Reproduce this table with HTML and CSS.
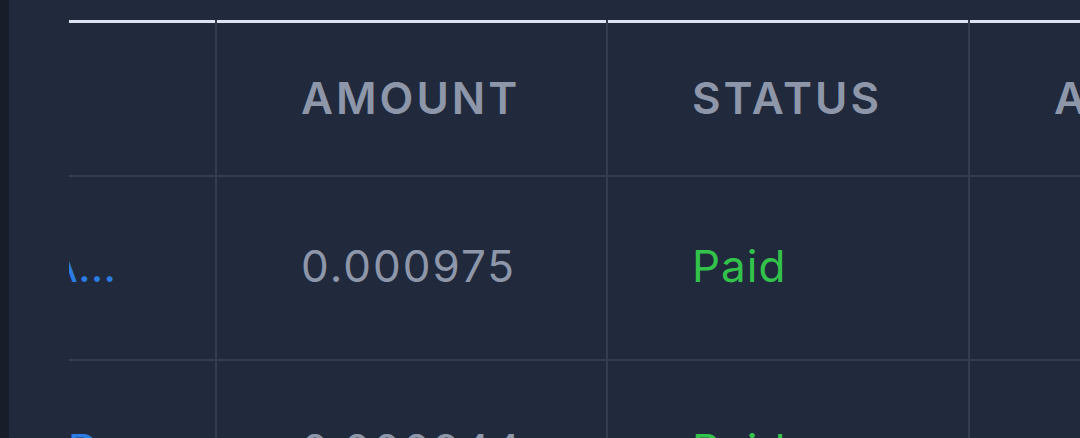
FILE: index.html
```html
<!DOCTYPE html>
<html lang="en">
<head>
    <meta charset="UTF-8">
    <meta name="viewport" content="width=device-width, initial-scale=1.0">
    <title>Payouts</title>
    <link rel="stylesheet" href="styles.css">
</head>
<body>

<div class="sidebar"></div>

<div class="main">
    <div class="scroller">
        <table class="payouts">
            <colgroup>
                <col class="col-tx">
                <col class="col-amount">
                <col class="col-status">
                <col class="col-address">
            </colgroup>
            <thead>
                <tr>
                    <th>TX</th>
                    <th>AMOUNT</th>
                    <th>STATUS</th>
                    <th>ADDRESS</th>
                </tr>
            </thead>
            <tbody>
                <tr>
                    <td class="tx"><a href="#" class="tx-link">3f9bA…</a></td>
                    <td class="amount">0.000975</td>
                    <td class="paid">Paid</td>
                    <td></td>
                </tr>
                <tr>
                    <td class="tx"><a href="#" class="tx-link">Dr</a></td>
                    <td class="amount">0.000944</td>
                    <td class="paid">Paid</td>
                    <td></td>
                </tr>
            </tbody>
        </table>
    </div>
</div>

</body>
</html>
```

FILE: styles.css
```css
body {
    margin: 0;
    height: 438px;
    display: flex;
    background-color: #212a3d;
    font-family: Inter, "Liberation Sans", sans-serif;
    overflow: hidden;
}
.sidebar {
    width: 9px;
    background-color: #181d2a;
}
.main {
    flex: 1;
    padding: 20px 0 0 60px;
    overflow: hidden;
}
.scroller {
    overflow: hidden;
}
.payouts {
    table-layout: fixed;
    width: 1453px;
    margin-left: -154px;
    border-collapse: separate;
    border-spacing: 0;
}
.col-tx { width: 300px; }
.col-amount { width: 391px; }
.col-status { width: 362px; }
.col-address { width: 400px; }

th, td {
    text-align: left;
    white-space: nowrap;
    font-size: 44px;
    line-height: 54px;
    padding-left: 84px;
    border-bottom: 2px solid #343c50;
}
th + th, td + td {
    border-left: 2px solid #343c50;
}
th {
    padding-top: 51px;
    padding-bottom: 50px;
    font-weight: 600;
    letter-spacing: 3px;
    color: #8e97aa;
    box-shadow: inset 0 3px 0 #dfe3ef;
}
td {
    padding-top: 62px;
    padding-bottom: 66px;
    color: #8e97aa;
}
.tx {
    text-align: right;
    padding-left: 0;
    padding-right: 99px;
}
.tx-link {
    color: #2b7de3;
    text-decoration: none;
}
.amount {
    letter-spacing: 2px;
}
.paid {
    color: #33c24a;
    letter-spacing: 1px;
}
```
